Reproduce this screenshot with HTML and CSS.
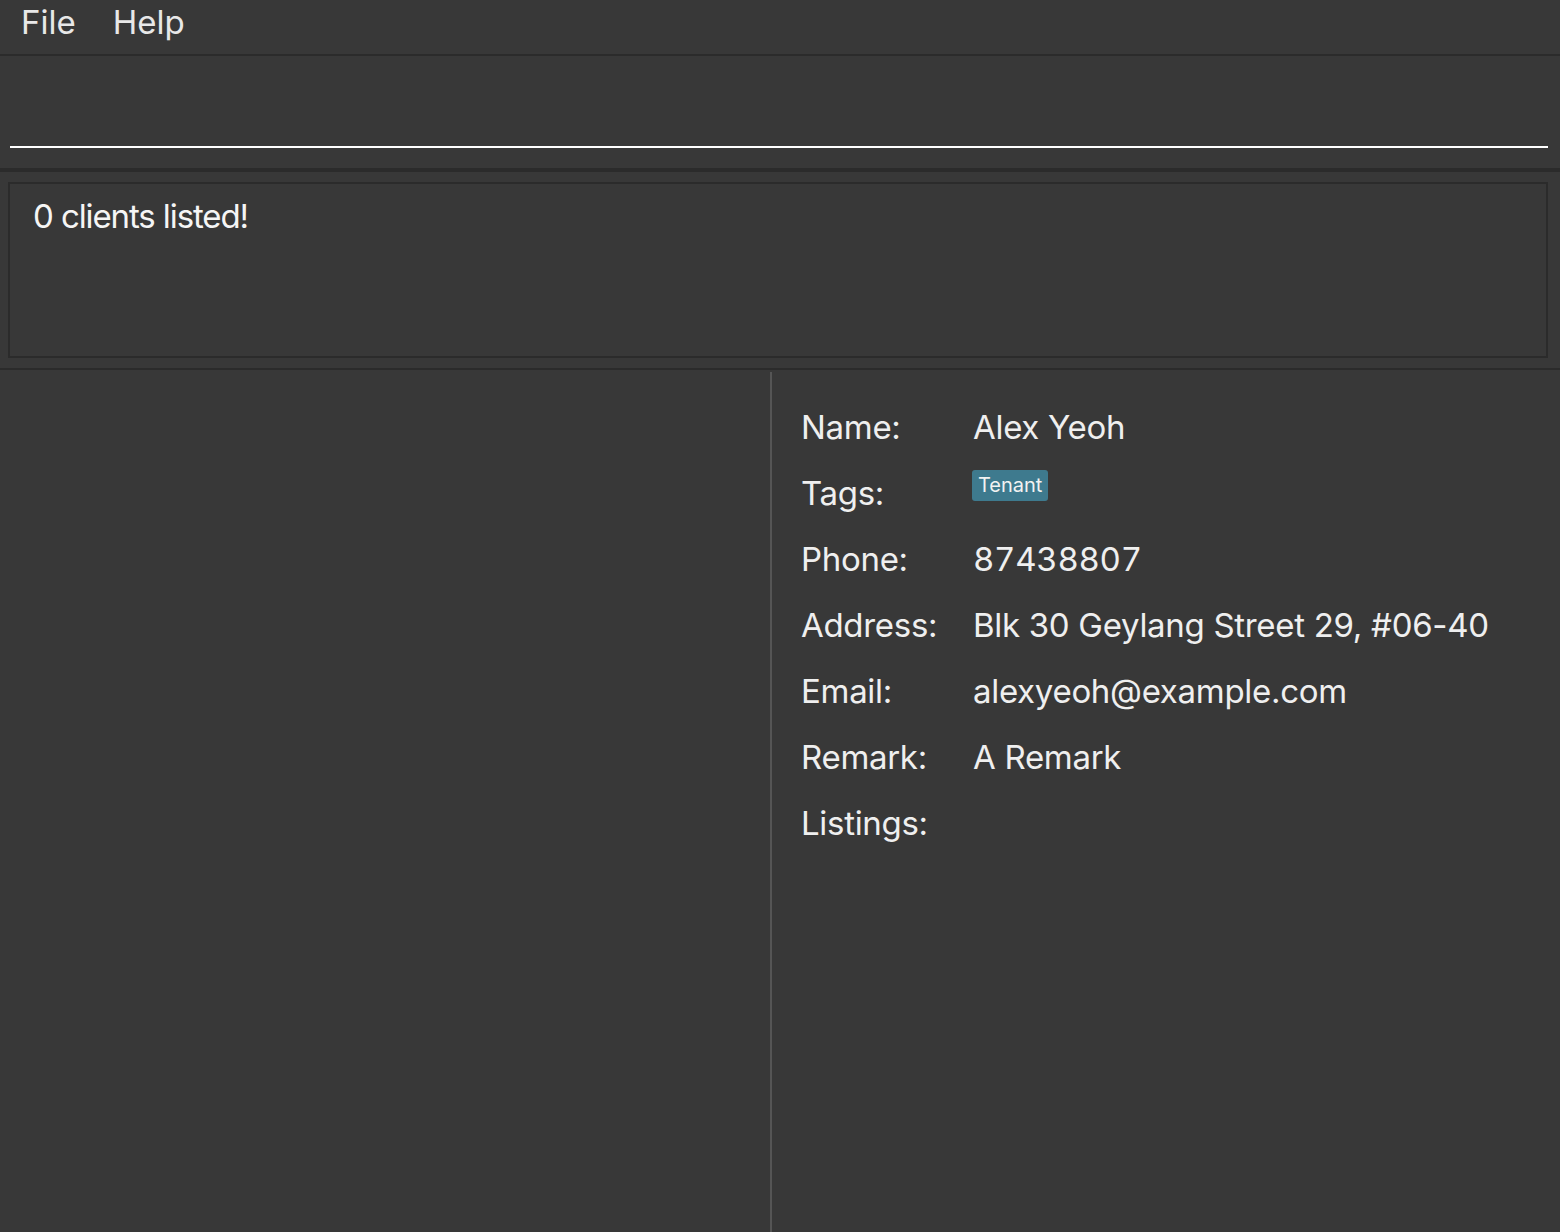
FILE: index.html
```html
<!DOCTYPE html>
<html lang="en">
<head>
<meta charset="utf-8">
<title>Clients</title>
<link rel="stylesheet" href="styles.css">
</head>
<body>
<div class="app">
  <div class="menubar">
    <span class="menu-item">File</span>
    <span class="menu-item">Help</span>
  </div>
  <div class="command">
    <div class="cmd-input"></div>
  </div>
  <div class="sep thick"></div>
  <div class="result-wrap">
    <div class="result">0 clients listed!</div>
  </div>
  <div class="sep"></div>
  <div class="main">
    <div class="list"></div>
    <div class="detail">
      <div class="label">Name:</div><div class="value">Alex Yeoh</div>
      <div class="label">Tags:</div><div class="value tags"><span class="tag">Tenant</span></div>
      <div class="label">Phone:</div><div class="value num">87438807</div>
      <div class="label">Address:</div><div class="value">Blk 30 Geylang Street 29, #06-40</div>
      <div class="label">Email:</div><div class="value">alexyeoh@example.com</div>
      <div class="label">Remark:</div><div class="value">A Remark</div>
      <div class="label">Listings:</div><div class="value"></div>
    </div>
  </div>
</div>
</body>
</html>
```
FILE: styles.css
```css
html, body {
  margin: 0;
  padding: 0;
  background: #383838;
}
body {
  font-family: Inter, "Open Sans", "Liberation Sans", sans-serif;
  color: #efefef;
  width: 1560px;
  height: 1232px;
  overflow: hidden;
}
.app {
  display: flex;
  flex-direction: column;
  height: 1232px;
}
.menubar {
  height: 54px;
  border-bottom: 2px solid #2b2b2b;
  display: flex;
  gap: 37px;
  padding-left: 21px;
  font-size: 33px;
  line-height: 44px;
  color: #e8e8e8;
  flex-shrink: 0;
}
.command {
  height: 112px;
  padding: 0 12px 0 10px;
  display: flex;
  flex-direction: column;
  flex-shrink: 0;
}
.cmd-input {
  margin-top: 32px;
  height: 58px;
  border-bottom: 2px solid #ffffff;
}
.sep {
  height: 2px;
  background: #2b2b2b;
  flex-shrink: 0;
}
.sep.thick {
  height: 4px;
}
.result-wrap {
  padding: 10px 12px 10px 8px;
  flex-shrink: 0;
}
.result {
  box-sizing: border-box;
  height: 176px;
  border: 2px solid #2b2b2b;
  padding: 12px 23px 0;
  font-size: 33px;
  line-height: 40px;
  color: #f5f5f5;
  letter-spacing: -1.1px;
}
.main {
  flex: 1;
  display: flex;
  padding-top: 2px;
}
.list {
  width: 770px;
}
.detail {
  flex: 1;
  border-left: 2px solid #555555;
  padding: 22px 0 0 29px;
  display: grid;
  grid-template-columns: 172px 1fr;
  grid-auto-rows: 66px;
  align-content: start;
  font-size: 33px;
  line-height: 66px;
  letter-spacing: -0.3px;
}
.label, .value {
  white-space: nowrap;
}
.num {
  font-variant-numeric: tabular-nums;
}
.tags {
  display: flex;
  align-items: flex-start;
}
.tag {
  margin-top: 10px;
  margin-left: -1px;
  background: #3e7a8e;
  color: #f2f2f2;
  font-size: 20px;
  line-height: 31px;
  padding: 0 6px;
  border-radius: 3px;
  letter-spacing: 0;
}
```
